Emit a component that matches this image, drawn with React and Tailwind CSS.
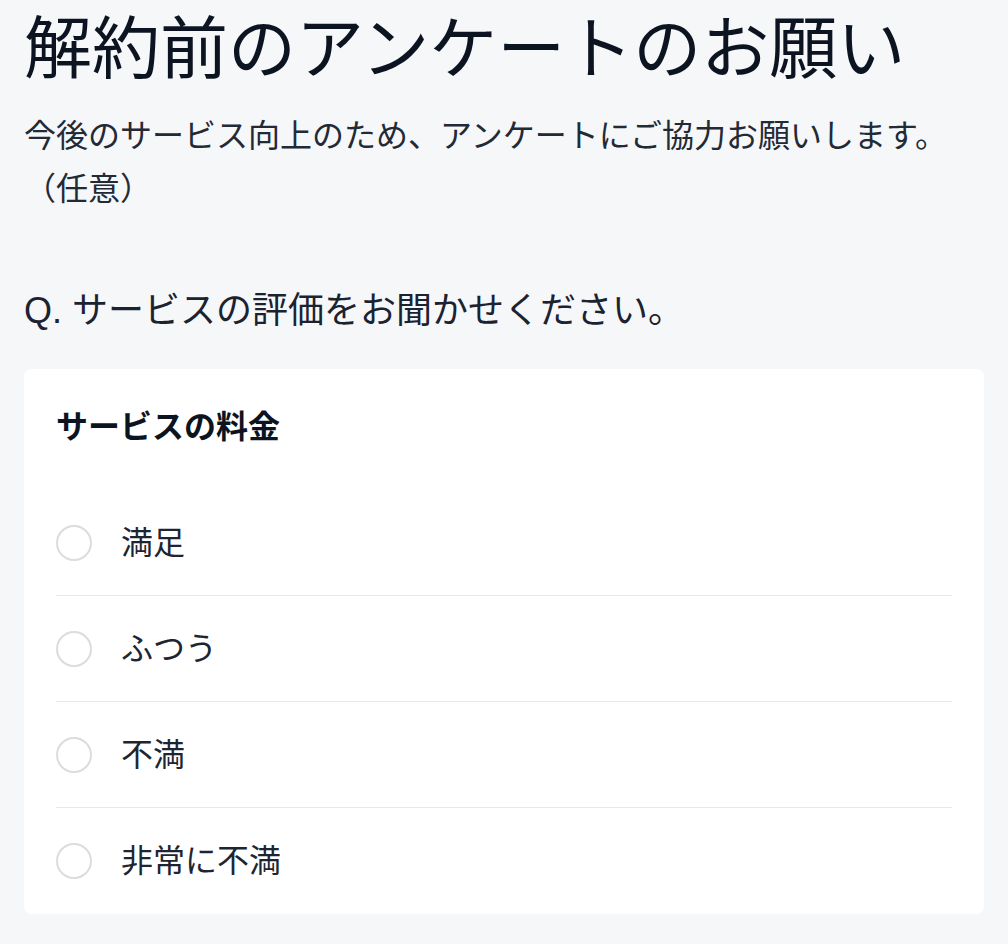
import React from 'react';

const OPTIONS = ['満足', 'ふつう', '不満', '非常に不満'];

const FONT = {
  fontFamily: '"Liberation Sans", "Noto Sans CJK JP", sans-serif',
};

export default function App() {
  return (
    <div
      className="min-h-[944px] w-full bg-[#f6f7f9] px-6 pt-[9px] pb-8 text-[#1e2532]"
      style={FONT}
    >
      <h1 className="text-[68px] leading-[80px] font-normal text-[#0d1421]">
        解約前のアンケートのお願い
      </h1>
      <p className="mt-[21px] text-[32px] leading-[53px] text-[#222a36]">
        今後のサービス向上のため、アンケートにご協力お願いします。
        <br />
        （任意）
      </p>

      <h2 className="mt-[71px] text-[36px] leading-[48px] font-normal text-[#1b2230]">
        Q. サービスの評価をお聞かせください。
      </h2>

      <div className="mt-[34px] rounded-lg bg-white px-8 pt-[34px]">
        <h3 className="text-[32px] leading-[48px] font-bold text-[#0d1421]">
          サービスの料金
        </h3>
        <ul className="mt-[39px]">
          {OPTIONS.map((label, i) => (
            <li
              key={label}
              className={`flex h-[106px] items-center gap-[29px] ${
                i < OPTIONS.length - 1 ? 'border-b border-[#e6e8eb]' : ''
              }`}
            >
              <span className="h-9 w-9 shrink-0 rounded-full border-2 border-[#dcdcdc] bg-white" />
              <span className="text-[32px] leading-[44px] text-[#1e2532]">
                {label}
              </span>
            </li>
          ))}
        </ul>
      </div>
    </div>
  );
}
